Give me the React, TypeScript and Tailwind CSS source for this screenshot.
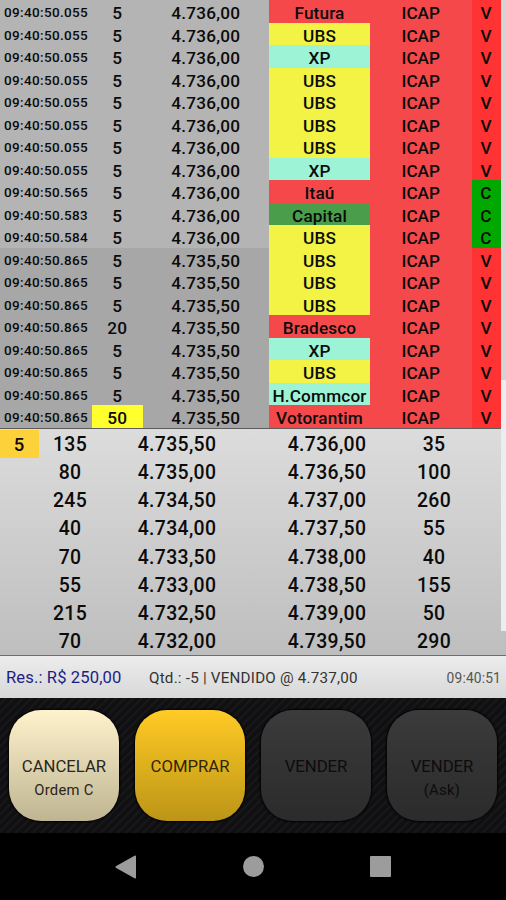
const YELLOW = 'bg-[#f2f344]';
const MINT = 'bg-[#9df3d6]';
const RED = 'bg-[#f5484b]';
const GREEN = 'bg-[#4a9e4b]';

type Trade = [time: string, qty: string, price: string, buyer: string, color: string, side: 'V' | 'C'];

const trades: Trade[] = [
  ['09:40:50.055', '5', '4.736,00', 'Futura', RED, 'V'],
  ['09:40:50.055', '5', '4.736,00', 'UBS', YELLOW, 'V'],
  ['09:40:50.055', '5', '4.736,00', 'XP', MINT, 'V'],
  ['09:40:50.055', '5', '4.736,00', 'UBS', YELLOW, 'V'],
  ['09:40:50.055', '5', '4.736,00', 'UBS', YELLOW, 'V'],
  ['09:40:50.055', '5', '4.736,00', 'UBS', YELLOW, 'V'],
  ['09:40:50.055', '5', '4.736,00', 'UBS', YELLOW, 'V'],
  ['09:40:50.055', '5', '4.736,00', 'XP', MINT, 'V'],
  ['09:40:50.565', '5', '4.736,00', 'Itaú', RED, 'C'],
  ['09:40:50.583', '5', '4.736,00', 'Capital', GREEN, 'C'],
  ['09:40:50.584', '5', '4.736,00', 'UBS', YELLOW, 'C'],
  ['09:40:50.865', '5', '4.735,50', 'UBS', YELLOW, 'V'],
  ['09:40:50.865', '5', '4.735,50', 'UBS', YELLOW, 'V'],
  ['09:40:50.865', '5', '4.735,50', 'UBS', YELLOW, 'V'],
  ['09:40:50.865', '20', '4.735,50', 'Bradesco', RED, 'V'],
  ['09:40:50.865', '5', '4.735,50', 'XP', MINT, 'V'],
  ['09:40:50.865', '5', '4.735,50', 'UBS', YELLOW, 'V'],
  ['09:40:50.865', '5', '4.735,50', 'H.Commcor', MINT, 'V'],
  ['09:40:50.865', '50', '4.735,50', 'Votorantim', RED, 'V'],
];

const book = [
  ['5', '135', '4.735,50', '4.736,00', '35'],
  ['', '80', '4.735,00', '4.736,50', '100'],
  ['', '245', '4.734,50', '4.737,00', '260'],
  ['', '40', '4.734,00', '4.737,50', '55'],
  ['', '70', '4.733,50', '4.738,00', '40'],
  ['', '55', '4.733,00', '4.738,50', '155'],
  ['', '215', '4.732,50', '4.739,00', '50'],
  ['', '70', '4.732,00', '4.739,50', '290'],
];

function TradeRow({ trade }: { trade: Trade }) {
  const [time, qty, price, buyer, color, side] = trade;
  const shade = price === '4.736,00' ? 'bg-[#b4b4b4]' : 'bg-[#a7a7a7]';
  return (
    <div className={`grid h-[22.5px] grid-cols-[92px_50.5px_126.5px_101px_101.5px_29px] items-stretch text-center text-[17.2px] leading-[26.5px] font-medium tracking-[0.15px] whitespace-nowrap ${shade}`}>
      <span className="pl-1 text-left text-[13.5px] leading-[24px] tracking-[0.35px]">{time}</span>
      <span className={qty === '50' ? 'bg-[#ffff2e]' : ''}>{qty}</span>
      <span className="tracking-[0.2px]">{price}</span>
      <span className={color}>{buyer}</span>
      <span className="bg-[#f5484b] tracking-normal">ICAP</span>
      <span className={side === 'V' ? 'bg-[#ff3333]' : 'bg-[#00a800]'}>{side}</span>
    </div>
  );
}

function OrderButton({ title, sub, tone }: { title: string; sub?: string; tone: string }) {
  return (
    <button
      className={`flex h-[111px] w-[110px] flex-col items-center rounded-[32px] pt-[44px] text-[16.7px] leading-[25px] whitespace-nowrap shadow-[0_0_2px_1px_#000] ${tone}`}
    >
      <span>{title}</span>
      {sub && <span className="text-[14.8px] leading-[23px] tracking-[0.3px]">{sub}</span>}
    </button>
  );
}

export default function App() {
  return (
    <div className="relative flex h-[900px] w-[506px] flex-col overflow-hidden bg-black font-['Roboto','Liberation_Sans',sans-serif] text-[#0b0b0b]">
      <section className="h-[428px] overflow-hidden bg-[#d4d4d4]">
        <div className="w-[500.5px] bg-[#b4b4b4]">
          {trades.map((t, i) => (
            <TradeRow key={i} trade={t} />
          ))}
        </div>
      </section>

      <section className="h-[227px] border-t border-[#5c5c5c] bg-linear-to-b from-[#dcdcdc] to-[#bebebe] pt-px">
        {book.map(([mine, bidQty, bid, ask, askQty], i) => (
          <div
            key={i}
            className="grid h-[28.15px] grid-cols-[38.5px_63px_151px_149px_65px] text-center text-[19.4px] leading-[30px] font-medium tracking-[0.35px]"
          >
            <span className={mine ? 'h-[27.5px] bg-[#fdd13a] text-[18.5px]' : ''}>{mine}</span>
            <span>{bidQty}</span>
            <span>{bid}</span>
            <span>{ask}</span>
            <span>{askQty}</span>
          </div>
        ))}
      </section>

      <section className="flex h-[43px] items-center border-t border-[#6e6e6e] bg-linear-to-b from-[#ededed] to-[#d8d8d8] pt-0.5 pr-[5px] pl-[6px] whitespace-nowrap">
        <span className="w-[143px] text-[16.6px] tracking-[0.12px] text-[#1d1d86]">Res.: R$ 250,00</span>
        <span className="text-[15.2px] tracking-[0.22px] text-[#333]">Qtd.: -5 | VENDIDO @ 4.737,00</span>
        <span className="ml-auto text-[13.8px] tracking-[0.15px] text-[#555]">09:40:51</span>
      </section>

      <section className="flex h-[135px] gap-4 bg-[#121214] bg-[repeating-linear-gradient(135deg,#101012_0px,#101012_3px,#1a1a1c_4px,#121214_6px)] pt-[12px] pl-[9px]">
        <OrderButton title="CANCELAR" sub="Ordem C" tone="bg-linear-to-b from-[#fff3cd] to-[#bfb592] text-[#2a261a]" />
        <OrderButton title="COMPRAR" tone="bg-linear-to-b from-[#ffcb25] to-[#bd9517] text-[#302505]" />
        <OrderButton title="VENDER" tone="bg-linear-to-b from-[#3b3b3b] to-[#2b2b2b] text-[#0c0c0c]" />
        <OrderButton title="VENDER" sub="(Ask)" tone="bg-linear-to-b from-[#3b3b3b] to-[#2b2b2b] text-[#0c0c0c]" />
      </section>

      <nav className="flex h-[67px] items-center pl-[115px]">
        <svg className="h-6 w-[21px]" viewBox="0 0 21 24" fill="#9c9c9c">
          <path d="M19.5.7Q21 0 21 1.5V22.5Q21 24 19.5 23.3L.8 12.8Q0 12 .8 11.2Z" />
        </svg>
        <span className="ml-[107px] size-[21px] rounded-full bg-[#9c9c9c]" />
        <span className="ml-[105.5px] size-[21.5px] rounded-[1px] bg-[#9c9c9c]" />
      </nav>

      <div className="absolute top-[380px] right-0 h-[251px] w-[5px] bg-[#ededed]" />
    </div>
  );
}
